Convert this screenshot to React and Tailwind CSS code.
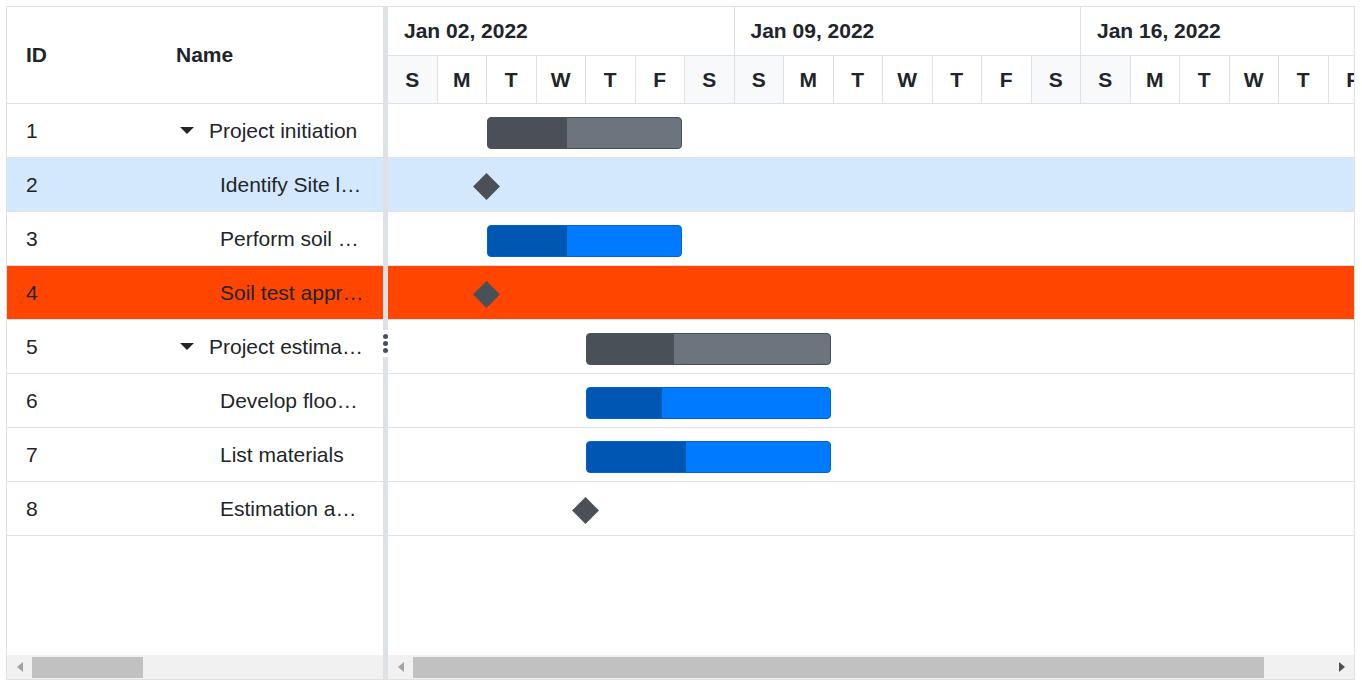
import React from 'react';

const rows = [
  { id: 1, name: 'Project initiation', parent: true, bar: { type: 'summary', left: 99, width: 195, progress: 79 } },
  { id: 2, name: 'Identify Site location', bg: 'bg-[#d3e8fc]', bar: { type: 'milestone', left: 98.5 } },
  { id: 3, name: 'Perform soil test', bar: { type: 'task', left: 99, width: 195, progress: 79 } },
  { id: 4, name: 'Soil test approval', bg: 'bg-[#ff4500]', bar: { type: 'milestone', left: 98.5 } },
  { id: 5, name: 'Project estimation', parent: true, bar: { type: 'summary', left: 198, width: 245, progress: 87 } },
  { id: 6, name: 'Develop floor plan for estimation', bar: { type: 'task', left: 198, width: 245, progress: 75 } },
  { id: 7, name: 'List materials', bar: { type: 'task', left: 198, width: 245, progress: 99 } },
  { id: 8, name: 'Estimation approval', bar: { type: 'milestone', left: 197.5 } },
];

const weeks = ['Jan 02, 2022', 'Jan 09, 2022', 'Jan 16, 2022', 'Jan 23, 2022'];
const days = ['S', 'M', 'T', 'W', 'T', 'F', 'S'];

function Caret() {
  return (
    <svg width="14" height="7" viewBox="0 0 14 7" className="shrink-0">
      <path d="M0 0 L14 0 L7 7 Z" fill="#212529" />
    </svg>
  );
}

function Arrow({ dir, color }) {
  return (
    <svg width="6" height="10" viewBox="0 0 6 10">
      {dir === 'left' ? <path d="M6 0 L6 10 L0 5 Z" fill={color} /> : <path d="M0 0 L0 10 L6 5 Z" fill={color} />}
    </svg>
  );
}

function Bar({ bar }) {
  if (bar.type === 'milestone') {
    return (
      <div
        className="absolute top-[19px] w-[19px] h-[19px] bg-[#495057] rotate-45"
        style={{ left: bar.left - 9.5 }}
      />
    );
  }
  const summary = bar.type === 'summary';
  return (
    <div
      className={
        'absolute top-[13px] h-[32px] rounded-[4px] border overflow-hidden ' +
        (summary ? 'bg-[#6c757d] border-[#495057]' : 'bg-[#007bff] border-[#0062cc]')
      }
      style={{ left: bar.left, width: bar.width }}
    >
      <div
        className={'h-full ' + (summary ? 'bg-[#495057]' : 'bg-[#0056b3]')}
        style={{ width: bar.progress }}
      />
    </div>
  );
}

export default function App() {
  return (
    <div className="min-h-screen bg-white p-[6px] font-['Liberation_Sans',Arial,sans-serif] text-[#212529]">
      <div className="flex h-[674px] w-[1349px] border border-[#dee2e6]">
        {/* Grid pane */}
        <div className="flex w-[376px] shrink-0 flex-col">
          <div className="flex h-[97px] items-center border-b border-[#dee2e6] text-[21px] font-bold">
            <div className="w-[150px] pl-[19px]">ID</div>
            <div className="pl-[19px]">Name</div>
          </div>
          {rows.map((r) => (
            <div key={r.id} className={'flex h-[54px] items-center border-b border-[#dee2e6] text-[21px] ' + (r.bg || '')}>
              <div className="w-[150px] shrink-0 pl-[19px]">{r.id}</div>
              <div className="flex min-w-0 flex-1 items-center pr-[19px] pl-[23px]">
                {r.parent ? (
                  <>
                    <Caret />
                    <span className="ml-[15px] truncate">{r.name}</span>
                  </>
                ) : (
                  <span className="ml-[40px] truncate">{r.name}</span>
                )}
              </div>
            </div>
          ))}
          <div className="flex-1" />
          <div className="flex h-[24px] items-center bg-[#f1f1f1]">
            <div className="flex w-[25px] justify-center pl-[1px]">
              <Arrow dir="left" color="#a3a3a3" />
            </div>
            <div className="h-[21px] w-[111px] bg-[#c1c1c1]" />
          </div>
        </div>

        {/* Splitter */}
        <div className="relative w-[5px] shrink-0 bg-[#dee2e6]">
          <div className="absolute top-[323px] left-[-1px] flex h-[27px] w-[7px] flex-col items-center justify-center gap-[2px] bg-white">
            <div className="h-[5px] w-[5px] rounded-full bg-[#495057]" />
            <div className="h-[5px] w-[5px] rounded-full bg-[#495057]" />
            <div className="h-[5px] w-[5px] rounded-full bg-[#495057]" />
          </div>
        </div>

        {/* Chart pane */}
        <div className="flex min-w-0 flex-1 flex-col overflow-hidden">
          <div className="h-[97px] border-b border-[#dee2e6]">
            <div className="flex h-[49px] border-b border-[#dee2e6]">
              {weeks.map((w) => (
                <div key={w} className="flex w-[346.5px] shrink-0 items-center border-r border-[#dee2e6] pl-[16px] text-[21px] font-bold">
                  {w}
                </div>
              ))}
            </div>
            <div className="flex h-[47px]">
              {weeks.map((w) =>
                days.map((d, i) => (
                  <div
                    key={w + i}
                    className={
                      'flex w-[49.5px] shrink-0 items-center justify-center border-r border-[#dee2e6] text-[21px] font-bold ' +
                      (i === 0 || i === 6 ? 'bg-[#f8f9fa]' : '')
                    }
                  >
                    {d}
                  </div>
                ))
              )}
            </div>
          </div>
          {rows.map((r) => (
            <div key={r.id} className={'relative h-[54px] border-b border-[#dee2e6] ' + (r.bg || '')}>
              <Bar bar={r.bar} />
            </div>
          ))}
          <div className="flex-1" />
          <div className="flex h-[24px] items-center bg-[#f1f1f1]">
            <div className="flex w-[25px] justify-center">
              <Arrow dir="left" color="#a3a3a3" />
            </div>
            <div className="h-[21px] w-[851px] bg-[#c1c1c1]" />
            <div className="flex-1" />
            <div className="flex w-[25px] justify-center">
              <Arrow dir="right" color="#505050" />
            </div>
          </div>
        </div>
      </div>
    </div>
  );
}
